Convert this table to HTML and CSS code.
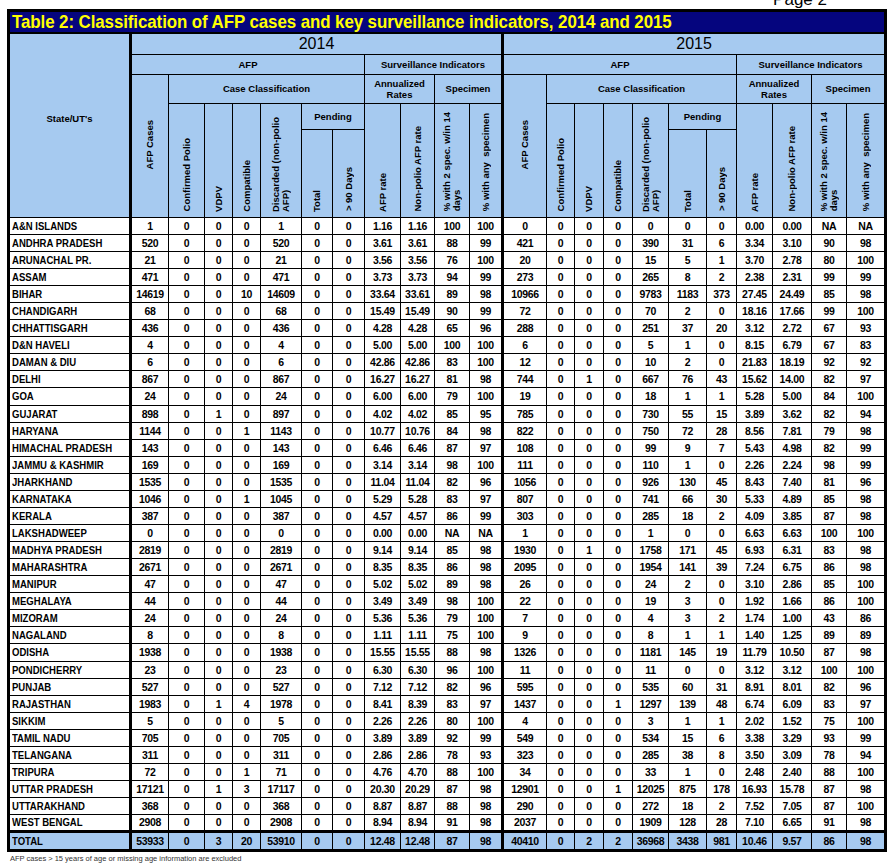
FILE: index.html
```html
<!DOCTYPE html>
<html lang="en">
<head>
<meta charset="utf-8">
<title>Table 2: Classification of AFP cases</title>
<link rel="stylesheet" href="styles.css">
</head>
<body>
<div class="page">
  <div class="pagenum"><div class="pagenum-text">Page 2</div></div>
  <table class="afp">
    <colgroup>
      <col class="k0">
      <col class="k1"><col class="k2"><col class="k3"><col class="k4"><col class="k5"><col class="k6"><col class="k7"><col class="k8"><col class="k9"><col class="k10"><col class="k11">
      <col class="m1"><col class="m2"><col class="m3"><col class="m4"><col class="m5"><col class="m6"><col class="m7"><col class="m8"><col class="m9"><col class="m10"><col class="m11">
    </colgroup>
    <thead>
      <tr class="r-title"><th colspan="23" class="title"><span class="title-text">Table 2: Classification of AFP cases and key surveillance indicators, 2014 and 2015</span></th></tr>
      <tr class="r-year">
        <th rowspan="5" class="state-h">State/UT's</th>
        <th colspan="11" class="year yl">2014</th>
        <th colspan="11" class="year yl">2015</th>
      </tr>
      <tr class="r-afp">
        <th colspan="7" class="yl">AFP</th><th colspan="4">Surveillance Indicators</th>
        <th colspan="7" class="yl">AFP</th><th colspan="4">Surveillance Indicators</th>
      </tr>
      <tr class="r-cc">
        <th rowspan="3" class="vt mid yl"><span>AFP Cases</span></th>
        <th colspan="6">Case Classification</th>
        <th colspan="2">Annualized<br>Rates</th>
        <th colspan="2">Specimen</th>
        <th rowspan="3" class="vt mid yl"><span>AFP Cases</span></th>
        <th colspan="6">Case Classification</th>
        <th colspan="2">Annualized<br>Rates</th>
        <th colspan="2">Specimen</th>
      </tr>
      <tr class="r-pend">
        <th rowspan="2" class="vt"><span>Confirmed Polio</span></th>
        <th rowspan="2" class="vt"><span>VDPV</span></th>
        <th rowspan="2" class="vt"><span>Compatible</span></th>
        <th rowspan="2" class="vt"><span>Discarded (non-polio<br>AFP)</span></th>
        <th colspan="2" class="pend">Pending</th>
        <th rowspan="2" class="vt"><span>AFP rate</span></th>
        <th rowspan="2" class="vt"><span>Non-polio AFP rate</span></th>
        <th rowspan="2" class="vt"><span>% with 2 spec. w/in 14<br>days</span></th>
        <th rowspan="2" class="vt"><span>% with any &nbsp;specimen</span></th>
        <th rowspan="2" class="vt"><span>Confirmed Polio</span></th>
        <th rowspan="2" class="vt"><span>VDPV</span></th>
        <th rowspan="2" class="vt"><span>Compatible</span></th>
        <th rowspan="2" class="vt"><span>Discarded (non-polio<br>AFP)</span></th>
        <th colspan="2" class="pend">Pending</th>
        <th rowspan="2" class="vt"><span>AFP rate</span></th>
        <th rowspan="2" class="vt"><span>Non-polio AFP rate</span></th>
        <th rowspan="2" class="vt"><span>% with 2 spec. w/in 14<br>days</span></th>
        <th rowspan="2" class="vt"><span>% with any &nbsp;specimen</span></th>
      </tr>
      <tr class="r-vert">
        <th class="vt"><span>Total</span></th>
        <th class="vt"><span>&gt; 90 Days</span></th>
        <th class="vt"><span>Total</span></th>
        <th class="vt"><span>&gt; 90 Days</span></th>
      </tr>
    </thead>
    <tbody>
      <tr><th><span class="nm">A&amp;N ISLANDS</span></th><td class="yl">1</td><td>0</td><td>0</td><td>0</td><td>1</td><td>0</td><td>0</td><td>1.16</td><td>1.16</td><td>100</td><td>100</td><td class="yl">0</td><td>0</td><td>0</td><td>0</td><td>0</td><td>0</td><td>0</td><td>0.00</td><td>0.00</td><td>NA</td><td>NA</td></tr>
      <tr><th><span class="nm">ANDHRA PRADESH</span></th><td class="yl">520</td><td>0</td><td>0</td><td>0</td><td>520</td><td>0</td><td>0</td><td>3.61</td><td>3.61</td><td>88</td><td>99</td><td class="yl">421</td><td>0</td><td>0</td><td>0</td><td>390</td><td>31</td><td>6</td><td>3.34</td><td>3.10</td><td>90</td><td>98</td></tr>
      <tr><th><span class="nm">ARUNACHAL PR.</span></th><td class="yl">21</td><td>0</td><td>0</td><td>0</td><td>21</td><td>0</td><td>0</td><td>3.56</td><td>3.56</td><td>76</td><td>100</td><td class="yl">20</td><td>0</td><td>0</td><td>0</td><td>15</td><td>5</td><td>1</td><td>3.70</td><td>2.78</td><td>80</td><td>100</td></tr>
      <tr><th><span class="nm">ASSAM</span></th><td class="yl">471</td><td>0</td><td>0</td><td>0</td><td>471</td><td>0</td><td>0</td><td>3.73</td><td>3.73</td><td>94</td><td>99</td><td class="yl">273</td><td>0</td><td>0</td><td>0</td><td>265</td><td>8</td><td>2</td><td>2.38</td><td>2.31</td><td>99</td><td>99</td></tr>
      <tr><th><span class="nm">BIHAR</span></th><td class="yl">14619</td><td>0</td><td>0</td><td>10</td><td>14609</td><td>0</td><td>0</td><td>33.64</td><td>33.61</td><td>89</td><td>98</td><td class="yl">10966</td><td>0</td><td>0</td><td>0</td><td>9783</td><td>1183</td><td>373</td><td>27.45</td><td>24.49</td><td>85</td><td>98</td></tr>
      <tr><th><span class="nm">CHANDIGARH</span></th><td class="yl">68</td><td>0</td><td>0</td><td>0</td><td>68</td><td>0</td><td>0</td><td>15.49</td><td>15.49</td><td>90</td><td>99</td><td class="yl">72</td><td>0</td><td>0</td><td>0</td><td>70</td><td>2</td><td>0</td><td>18.16</td><td>17.66</td><td>99</td><td>100</td></tr>
      <tr><th><span class="nm">CHHATTISGARH</span></th><td class="yl">436</td><td>0</td><td>0</td><td>0</td><td>436</td><td>0</td><td>0</td><td>4.28</td><td>4.28</td><td>65</td><td>96</td><td class="yl">288</td><td>0</td><td>0</td><td>0</td><td>251</td><td>37</td><td>20</td><td>3.12</td><td>2.72</td><td>67</td><td>93</td></tr>
      <tr><th><span class="nm">D&amp;N HAVELI</span></th><td class="yl">4</td><td>0</td><td>0</td><td>0</td><td>4</td><td>0</td><td>0</td><td>5.00</td><td>5.00</td><td>100</td><td>100</td><td class="yl">6</td><td>0</td><td>0</td><td>0</td><td>5</td><td>1</td><td>0</td><td>8.15</td><td>6.79</td><td>67</td><td>83</td></tr>
      <tr><th><span class="nm">DAMAN &amp; DIU</span></th><td class="yl">6</td><td>0</td><td>0</td><td>0</td><td>6</td><td>0</td><td>0</td><td>42.86</td><td>42.86</td><td>83</td><td>100</td><td class="yl">12</td><td>0</td><td>0</td><td>0</td><td>10</td><td>2</td><td>0</td><td>21.83</td><td>18.19</td><td>92</td><td>92</td></tr>
      <tr><th><span class="nm">DELHI</span></th><td class="yl">867</td><td>0</td><td>0</td><td>0</td><td>867</td><td>0</td><td>0</td><td>16.27</td><td>16.27</td><td>81</td><td>98</td><td class="yl">744</td><td>0</td><td>1</td><td>0</td><td>667</td><td>76</td><td>43</td><td>15.62</td><td>14.00</td><td>82</td><td>97</td></tr>
      <tr class="tall"><th><span class="nm">GOA</span></th><td class="yl">24</td><td>0</td><td>0</td><td>0</td><td>24</td><td>0</td><td>0</td><td>6.00</td><td>6.00</td><td>79</td><td>100</td><td class="yl">19</td><td>0</td><td>0</td><td>0</td><td>18</td><td>1</td><td>1</td><td>5.28</td><td>5.00</td><td>84</td><td>100</td></tr>
      <tr><th><span class="nm">GUJARAT</span></th><td class="yl">898</td><td>0</td><td>1</td><td>0</td><td>897</td><td>0</td><td>0</td><td>4.02</td><td>4.02</td><td>85</td><td>95</td><td class="yl">785</td><td>0</td><td>0</td><td>0</td><td>730</td><td>55</td><td>15</td><td>3.89</td><td>3.62</td><td>82</td><td>94</td></tr>
      <tr><th><span class="nm">HARYANA</span></th><td class="yl">1144</td><td>0</td><td>0</td><td>1</td><td>1143</td><td>0</td><td>0</td><td>10.77</td><td>10.76</td><td>84</td><td>98</td><td class="yl">822</td><td>0</td><td>0</td><td>0</td><td>750</td><td>72</td><td>28</td><td>8.56</td><td>7.81</td><td>79</td><td>98</td></tr>
      <tr><th><span class="nm">HIMACHAL PRADESH</span></th><td class="yl">143</td><td>0</td><td>0</td><td>0</td><td>143</td><td>0</td><td>0</td><td>6.46</td><td>6.46</td><td>87</td><td>97</td><td class="yl">108</td><td>0</td><td>0</td><td>0</td><td>99</td><td>9</td><td>7</td><td>5.43</td><td>4.98</td><td>82</td><td>99</td></tr>
      <tr><th><span class="nm">JAMMU &amp; KASHMIR</span></th><td class="yl">169</td><td>0</td><td>0</td><td>0</td><td>169</td><td>0</td><td>0</td><td>3.14</td><td>3.14</td><td>98</td><td>100</td><td class="yl">111</td><td>0</td><td>0</td><td>0</td><td>110</td><td>1</td><td>0</td><td>2.26</td><td>2.24</td><td>98</td><td>99</td></tr>
      <tr><th><span class="nm">JHARKHAND</span></th><td class="yl">1535</td><td>0</td><td>0</td><td>0</td><td>1535</td><td>0</td><td>0</td><td>11.04</td><td>11.04</td><td>82</td><td>96</td><td class="yl">1056</td><td>0</td><td>0</td><td>0</td><td>926</td><td>130</td><td>45</td><td>8.43</td><td>7.40</td><td>81</td><td>96</td></tr>
      <tr><th><span class="nm">KARNATAKA</span></th><td class="yl">1046</td><td>0</td><td>0</td><td>1</td><td>1045</td><td>0</td><td>0</td><td>5.29</td><td>5.28</td><td>83</td><td>97</td><td class="yl">807</td><td>0</td><td>0</td><td>0</td><td>741</td><td>66</td><td>30</td><td>5.33</td><td>4.89</td><td>85</td><td>98</td></tr>
      <tr><th><span class="nm">KERALA</span></th><td class="yl">387</td><td>0</td><td>0</td><td>0</td><td>387</td><td>0</td><td>0</td><td>4.57</td><td>4.57</td><td>86</td><td>99</td><td class="yl">303</td><td>0</td><td>0</td><td>0</td><td>285</td><td>18</td><td>2</td><td>4.09</td><td>3.85</td><td>87</td><td>98</td></tr>
      <tr><th><span class="nm">LAKSHADWEEP</span></th><td class="yl">0</td><td>0</td><td>0</td><td>0</td><td>0</td><td>0</td><td>0</td><td>0.00</td><td>0.00</td><td>NA</td><td>NA</td><td class="yl">1</td><td>0</td><td>0</td><td>0</td><td>1</td><td>0</td><td>0</td><td>6.63</td><td>6.63</td><td>100</td><td>100</td></tr>
      <tr><th><span class="nm">MADHYA PRADESH</span></th><td class="yl">2819</td><td>0</td><td>0</td><td>0</td><td>2819</td><td>0</td><td>0</td><td>9.14</td><td>9.14</td><td>85</td><td>98</td><td class="yl">1930</td><td>0</td><td>1</td><td>0</td><td>1758</td><td>171</td><td>45</td><td>6.93</td><td>6.31</td><td>83</td><td>98</td></tr>
      <tr><th><span class="nm">MAHARASHTRA</span></th><td class="yl">2671</td><td>0</td><td>0</td><td>0</td><td>2671</td><td>0</td><td>0</td><td>8.35</td><td>8.35</td><td>86</td><td>98</td><td class="yl">2095</td><td>0</td><td>0</td><td>0</td><td>1954</td><td>141</td><td>39</td><td>7.24</td><td>6.75</td><td>86</td><td>98</td></tr>
      <tr><th><span class="nm">MANIPUR</span></th><td class="yl">47</td><td>0</td><td>0</td><td>0</td><td>47</td><td>0</td><td>0</td><td>5.02</td><td>5.02</td><td>89</td><td>98</td><td class="yl">26</td><td>0</td><td>0</td><td>0</td><td>24</td><td>2</td><td>0</td><td>3.10</td><td>2.86</td><td>85</td><td>100</td></tr>
      <tr><th><span class="nm">MEGHALAYA</span></th><td class="yl">44</td><td>0</td><td>0</td><td>0</td><td>44</td><td>0</td><td>0</td><td>3.49</td><td>3.49</td><td>98</td><td>100</td><td class="yl">22</td><td>0</td><td>0</td><td>0</td><td>19</td><td>3</td><td>0</td><td>1.92</td><td>1.66</td><td>86</td><td>100</td></tr>
      <tr><th><span class="nm">MIZORAM</span></th><td class="yl">24</td><td>0</td><td>0</td><td>0</td><td>24</td><td>0</td><td>0</td><td>5.36</td><td>5.36</td><td>79</td><td>100</td><td class="yl">7</td><td>0</td><td>0</td><td>0</td><td>4</td><td>3</td><td>2</td><td>1.74</td><td>1.00</td><td>43</td><td>86</td></tr>
      <tr><th><span class="nm">NAGALAND</span></th><td class="yl">8</td><td>0</td><td>0</td><td>0</td><td>8</td><td>0</td><td>0</td><td>1.11</td><td>1.11</td><td>75</td><td>100</td><td class="yl">9</td><td>0</td><td>0</td><td>0</td><td>8</td><td>1</td><td>1</td><td>1.40</td><td>1.25</td><td>89</td><td>89</td></tr>
      <tr class="tall"><th><span class="nm">ODISHA</span></th><td class="yl">1938</td><td>0</td><td>0</td><td>0</td><td>1938</td><td>0</td><td>0</td><td>15.55</td><td>15.55</td><td>88</td><td>98</td><td class="yl">1326</td><td>0</td><td>0</td><td>0</td><td>1181</td><td>145</td><td>19</td><td>11.79</td><td>10.50</td><td>87</td><td>98</td></tr>
      <tr><th><span class="nm">PONDICHERRY</span></th><td class="yl">23</td><td>0</td><td>0</td><td>0</td><td>23</td><td>0</td><td>0</td><td>6.30</td><td>6.30</td><td>96</td><td>100</td><td class="yl">11</td><td>0</td><td>0</td><td>0</td><td>11</td><td>0</td><td>0</td><td>3.12</td><td>3.12</td><td>100</td><td>100</td></tr>
      <tr><th><span class="nm">PUNJAB</span></th><td class="yl">527</td><td>0</td><td>0</td><td>0</td><td>527</td><td>0</td><td>0</td><td>7.12</td><td>7.12</td><td>82</td><td>96</td><td class="yl">595</td><td>0</td><td>0</td><td>0</td><td>535</td><td>60</td><td>31</td><td>8.91</td><td>8.01</td><td>82</td><td>96</td></tr>
      <tr><th><span class="nm">RAJASTHAN</span></th><td class="yl">1983</td><td>0</td><td>1</td><td>4</td><td>1978</td><td>0</td><td>0</td><td>8.41</td><td>8.39</td><td>83</td><td>97</td><td class="yl">1437</td><td>0</td><td>0</td><td>1</td><td>1297</td><td>139</td><td>48</td><td>6.74</td><td>6.09</td><td>83</td><td>97</td></tr>
      <tr><th><span class="nm">SIKKIM</span></th><td class="yl">5</td><td>0</td><td>0</td><td>0</td><td>5</td><td>0</td><td>0</td><td>2.26</td><td>2.26</td><td>80</td><td>100</td><td class="yl">4</td><td>0</td><td>0</td><td>0</td><td>3</td><td>1</td><td>1</td><td>2.02</td><td>1.52</td><td>75</td><td>100</td></tr>
      <tr><th><span class="nm">TAMIL NADU</span></th><td class="yl">705</td><td>0</td><td>0</td><td>0</td><td>705</td><td>0</td><td>0</td><td>3.89</td><td>3.89</td><td>92</td><td>99</td><td class="yl">549</td><td>0</td><td>0</td><td>0</td><td>534</td><td>15</td><td>6</td><td>3.38</td><td>3.29</td><td>93</td><td>99</td></tr>
      <tr><th><span class="nm">TELANGANA</span></th><td class="yl">311</td><td>0</td><td>0</td><td>0</td><td>311</td><td>0</td><td>0</td><td>2.86</td><td>2.86</td><td>78</td><td>93</td><td class="yl">323</td><td>0</td><td>0</td><td>0</td><td>285</td><td>38</td><td>8</td><td>3.50</td><td>3.09</td><td>78</td><td>94</td></tr>
      <tr><th><span class="nm">TRIPURA</span></th><td class="yl">72</td><td>0</td><td>0</td><td>1</td><td>71</td><td>0</td><td>0</td><td>4.76</td><td>4.70</td><td>88</td><td>100</td><td class="yl">34</td><td>0</td><td>0</td><td>0</td><td>33</td><td>1</td><td>0</td><td>2.48</td><td>2.40</td><td>88</td><td>100</td></tr>
      <tr><th><span class="nm">UTTAR PRADESH</span></th><td class="yl">17121</td><td>0</td><td>1</td><td>3</td><td>17117</td><td>0</td><td>0</td><td>20.30</td><td>20.29</td><td>87</td><td>98</td><td class="yl">12901</td><td>0</td><td>0</td><td>1</td><td>12025</td><td>875</td><td>178</td><td>16.93</td><td>15.78</td><td>87</td><td>98</td></tr>
      <tr><th><span class="nm">UTTARAKHAND</span></th><td class="yl">368</td><td>0</td><td>0</td><td>0</td><td>368</td><td>0</td><td>0</td><td>8.87</td><td>8.87</td><td>88</td><td>98</td><td class="yl">290</td><td>0</td><td>0</td><td>0</td><td>272</td><td>18</td><td>2</td><td>7.52</td><td>7.05</td><td>87</td><td>100</td></tr>
      <tr><th><span class="nm">WEST BENGAL</span></th><td class="yl">2908</td><td>0</td><td>0</td><td>0</td><td>2908</td><td>0</td><td>0</td><td>8.94</td><td>8.94</td><td>91</td><td>98</td><td class="yl">2037</td><td>0</td><td>0</td><td>0</td><td>1909</td><td>128</td><td>28</td><td>7.10</td><td>6.65</td><td>91</td><td>98</td></tr>
      <tr class="total"><th><span class="nm">TOTAL</span></th><td class="yl">53933</td><td>0</td><td>3</td><td>20</td><td>53910</td><td>0</td><td>0</td><td>12.48</td><td>12.48</td><td>87</td><td>98</td><td class="yl">40410</td><td>0</td><td>2</td><td>2</td><td>36968</td><td>3438</td><td>981</td><td>10.46</td><td>9.57</td><td>86</td><td>98</td></tr>
    </tbody>
  </table>
  <p class="footnote">AFP cases &gt; 15 years of age or missing age information are excluded</p>
</div>
</body>
</html>
```

FILE: styles.css
```css
html, body {
  margin: 0;
  padding: 0;
  background: #fff;
}
body {
  font-family: "Liberation Sans", Arial, sans-serif;
  color: #000;
}
.page {
  width: 887px;
  padding-left: 7px;
  box-sizing: border-box;
}
.pagenum {
  height: 9px;
  overflow: hidden;
  padding-right: 60px;
  text-align: right;
}
.pagenum-text {
  margin-top: -9px;
  font-size: 17px;
  line-height: 17px;
  color: #000;
}
.afp {
  border-collapse: collapse;
  table-layout: fixed;
  width: 877px;
  border: 3px solid #000;
}
.k0 { width: 122px; }
.k1 { width: 38px; } .k2 { width: 36px; } .k3 { width: 28px; } .k4 { width: 28px; }
.k5 { width: 41px; } .k6 { width: 31px; } .k7 { width: 32px; } .k8 { width: 36px; }
.k9 { width: 34px; } .k10 { width: 35px; } .k11 { width: 33px; }
.m1 { width: 44px; } .m2 { width: 28px; } .m3 { width: 29px; } .m4 { width: 29px; }
.m5 { width: 36px; } .m6 { width: 38px; } .m7 { width: 30px; } .m8 { width: 36px; }
.m9 { width: 39px; } .m10 { width: 35px; } .m11 { width: 39px; }

.afp th, .afp td {
  border: 1px solid #000;
  padding: 0;
  overflow: hidden;
}
.afp thead th {
  background: #a6caf0;
  font-size: 9.5px;
  font-weight: bold;
  line-height: 11px;
  text-align: center;
  vertical-align: middle;
}
.afp .yl { border-left: 3px solid #000; }

.r-title { height: 22px; }
.r-year { height: 21px; }
.r-afp { height: 20px; }
.r-cc { height: 29px; }
.r-pend { height: 26px; }
.r-vert { height: 88px; }

.afp thead th.title {
  background: #05057e;
  color: #ffff00;
  font-size: 19px;
  line-height: 20px;
  font-weight: bold;
  text-align: left;
  padding-left: 2px;
  border: 3px solid #000;
  border-bottom: 2px solid #000;
  white-space: nowrap;
}
.title-text {
  display: inline-block;
  transform: scaleX(0.89);
  transform-origin: 0 50%;
  letter-spacing: -0.1px;
}
.afp thead th.year {
  font-size: 16px;
  font-weight: normal;
  line-height: 18px;
}
.afp thead th.state-h {
  padding-bottom: 14px;
}
.afp thead th.vt {
  vertical-align: bottom;
  padding-bottom: 3px;
}
.afp thead th.vt.mid {
  vertical-align: middle;
  padding-bottom: 0;
}
.vt span {
  display: inline-block;
  writing-mode: vertical-rl;
  transform: rotate(180deg);
  text-align: left;
  white-space: nowrap;
  line-height: 10px;
  font-size: 9.5px;
}

.afp tbody tr { height: 17px; }
.afp tbody tr.tall { height: 18px; }
.afp tbody td, .afp tbody th {
  font-size: 10.5px;
  font-weight: bold;
  letter-spacing: -0.3px;
  line-height: 12px;
  text-align: center;
  vertical-align: middle;
  background: #fff;
  white-space: nowrap;
}
.afp tbody th {
  text-align: left;
  padding-left: 2px;
}
.nm {
  display: inline-block;
  font-size: 11.5px;
  letter-spacing: 0;
  transform: scaleX(0.83);
  transform-origin: 0 50%;
}
.afp tbody tr.total { height: 19px; }
.afp tbody tr.total td, .afp tbody tr.total th {
  background: #a6caf0;
  border-top: 3px solid #000;
}
.footnote {
  margin: 2px 0 0 3px;
  font-size: 7.5px;
  line-height: 9px;
  color: #333;
}
```
